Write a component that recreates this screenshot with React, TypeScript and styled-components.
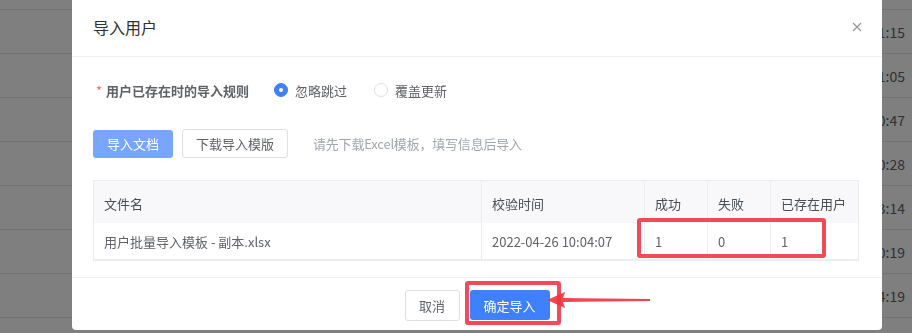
import styled, { createGlobalStyle } from 'styled-components';

const GlobalStyle = createGlobalStyle`
  html, body {
    margin: 0;
    padding: 0;
    background: #ffffff;
    font-family: "Noto Sans CJK SC", "Noto Sans", sans-serif;
  }
  * {
    box-sizing: border-box;
  }
`;

/* page behind the modal */
const Page = styled.div`
  width: 912px;
  height: 333px;
  overflow: hidden;
  padding-top: 9px;
`;

const PageRow = styled.div`
  height: 44px;
  border-top: 1px solid #e4e7ed;
  display: flex;
  align-items: center;
  justify-content: flex-end;
  padding-right: 7px;
  font-size: 14px;
  color: #606266;
`;

const Overlay = styled.div`
  position: fixed;
  inset: 0;
  background: rgba(0, 0, 0, 0.5);
  display: flex;
  align-items: flex-start;
  padding-left: 72px;
`;

const Dialog = styled.div`
  position: relative;
  width: 810px;
  height: 330px;
  background: #ffffff;
  border-radius: 0 0 4px 4px;
  display: flex;
  flex-direction: column;
`;

const Header = styled.div`
  height: 57px;
  display: flex;
  align-items: center;
  justify-content: space-between;
  padding: 0 20px 3px 21px;
  border-bottom: 1px solid #f0f1f6;
`;

const Title = styled.span`
  font-size: 16px;
  color: #303133;
`;

const CloseBtn = styled.span`
  display: flex;
  width: 10px;
  height: 10px;
  cursor: pointer;
`;

const Body = styled.div`
  flex: 1;
  padding: 17px 23px 0 21px;
  border-bottom: 1px solid #f0f1f6;
`;

const FormRow = styled.div`
  height: 32px;
  display: flex;
  align-items: center;
`;

const FormLabel = styled.label`
  font-size: 13px;
  font-weight: 700;
  color: #606266;
  padding-left: 3px;
  margin-right: 25px;
`;

const Star = styled.span`
  color: #f56c6c;
  font-weight: 400;
  margin-right: 4px;
`;

const RadioItem = styled.label`
  display: flex;
  align-items: center;
  gap: 7px;
  font-size: 13px;
  color: #606266;
  margin-right: 27px;
  cursor: pointer;
`;

type RadioProps = { checked: boolean };
const RadioDot = styled.span<RadioProps>`
  width: 14px;
  height: 14px;
  border-radius: 50%;
  border: 1px solid ${(p) => (p.checked ? '#3f80ff' : '#dcdfe6')};
  background: ${(p) => (p.checked ? '#3f80ff' : '#ffffff')};
  display: flex;
  align-items: center;
  justify-content: center;
  &::after {
    content: '';
    width: 4px;
    height: 4px;
    border-radius: 50%;
    background: #ffffff;
    display: ${(p) => (p.checked ? 'block' : 'none')};
  }
`;

const ActionRow = styled.div`
  margin-top: 23px;
  display: flex;
  align-items: center;
`;

const UploadButton = styled.button`
  width: 80px;
  height: 28px;
  border: 0;
  border-radius: 3px;
  background: #78a6ff;
  color: #ffffff;
  font-size: 13px;
  font-family: inherit;
  padding: 0;
  cursor: not-allowed;
`;

const PlainButton = styled.button`
  height: 29px;
  padding: 0 13px;
  border: 1px solid #dcdfe6;
  border-radius: 3px;
  background: #ffffff;
  color: #606266;
  font-size: 13px;
  font-family: inherit;
  margin-left: 9px;
  cursor: pointer;
`;

const Hint = styled.span`
  margin-left: 25px;
  font-size: 13px;
  color: #a3a6ad;
  letter-spacing: -0.2px;
`;

const Table = styled.div`
  margin-top: 22px;
  border: 1px solid #ebedf3;
  border-bottom-width: 2px;
`;

type RowProps = { head?: boolean };
const TableRow = styled.div<RowProps>`
  display: grid;
  grid-template-columns: 387px 163px 63px 63px 1fr;
  height: ${(p) => (p.head ? '42px' : '36px')};
  background: ${(p) => (p.head ? '#f8f8fa' : '#ffffff')};
`;

const Cell = styled.div<RowProps>`
  display: flex;
  align-items: center;
  padding-left: 10px;
  font-size: 13px;
  white-space: nowrap;
  color: ${(p) => (p.head ? '#4a4d52' : '#606266')};
  padding-top: ${(p) => (p.head ? '2px' : '0')};
  & + & {
    border-left: 1px solid #ebedf3;
  }
`;

const Footer = styled.div`
  height: 52px;
  display: flex;
  justify-content: center;
  align-items: flex-start;
  padding-top: 12px;
  gap: 10px;
`;

const CancelButton = styled.button`
  width: 55px;
  height: 31px;
  border: 1px solid #dcdfe6;
  border-radius: 3px;
  background: #ffffff;
  color: #606266;
  font-size: 13px;
  font-family: inherit;
  cursor: pointer;
`;

const ConfirmButton = styled.button`
  width: 80px;
  height: 30px;
  border: 0;
  border-radius: 3px;
  background: #3f80ff;
  color: #ffffff;
  font-size: 13px;
  font-family: inherit;
  cursor: pointer;
`;

/* red annotations drawn over the screenshot */
type MarkProps = { left: number; top: number; w: number; h: number };
const Mark = styled.div<MarkProps>`
  position: absolute;
  left: ${(p) => p.left}px;
  top: ${(p) => p.top}px;
  width: ${(p) => p.w}px;
  height: ${(p) => p.h}px;
  border: 4px solid #f24b57;
  border-radius: 3px;
  pointer-events: none;
`;

const Arrow = styled.svg`
  position: absolute;
  left: 474px;
  top: 288px;
  pointer-events: none;
`;

const pageTimes = [
  '10:11:15',
  '10:01:05',
  '18:20:47',
  '17:50:28',
  '16:43:14',
  '16:40:19',
  '15:24:19',
  '',
];

export default function App() {
  return (
    <>
      <GlobalStyle />
      <Page>
        {pageTimes.map((t, i) => (
          <PageRow key={i}>{t}</PageRow>
        ))}
      </Page>
      <Overlay>
        <Dialog>
          <Header>
            <Title>导入用户</Title>
            <CloseBtn>
              <svg width="10" height="10" viewBox="0 0 10 10">
                <path d="M1 1 L9 9 M9 1 L1 9" stroke="#909399" strokeWidth="1.1" />
              </svg>
            </CloseBtn>
          </Header>
          <Body>
            <FormRow>
              <FormLabel>
                <Star>*</Star>用户已存在时的导入规则
              </FormLabel>
              <RadioItem>
                <RadioDot checked />
                忽略跳过
              </RadioItem>
              <RadioItem>
                <RadioDot checked={false} />
                覆盖更新
              </RadioItem>
            </FormRow>
            <ActionRow>
              <UploadButton>导入文档</UploadButton>
              <PlainButton>下载导入模版</PlainButton>
              <Hint>请先下载Excel模板，填写信息后导入</Hint>
            </ActionRow>
            <Table>
              <TableRow head>
                <Cell head>文件名</Cell>
                <Cell head>校验时间</Cell>
                <Cell head>成功</Cell>
                <Cell head>失败</Cell>
                <Cell head>已存在用户</Cell>
              </TableRow>
              <TableRow>
                <Cell>用户批量导入模板 - 副本.xlsx</Cell>
                <Cell>2022-04-26 10:04:07</Cell>
                <Cell>1</Cell>
                <Cell>0</Cell>
                <Cell>1</Cell>
              </TableRow>
            </Table>
          </Body>
          <Footer>
            <CancelButton>取消</CancelButton>
            <ConfirmButton>确定导入</ConfirmButton>
          </Footer>
          <Mark left={565} top={218} w={189} h={40} />
          <Mark left={393} top={281} w={96} h={44} />
          <Arrow width="104" height="24" viewBox="0 0 104 24">
            <path d="M1 12 L19 4 L17 10 L104 11 L104 13 L17 14 L19 20 Z" fill="#f0323f" opacity="0.9" />
          </Arrow>
        </Dialog>
      </Overlay>
    </>
  );
}
